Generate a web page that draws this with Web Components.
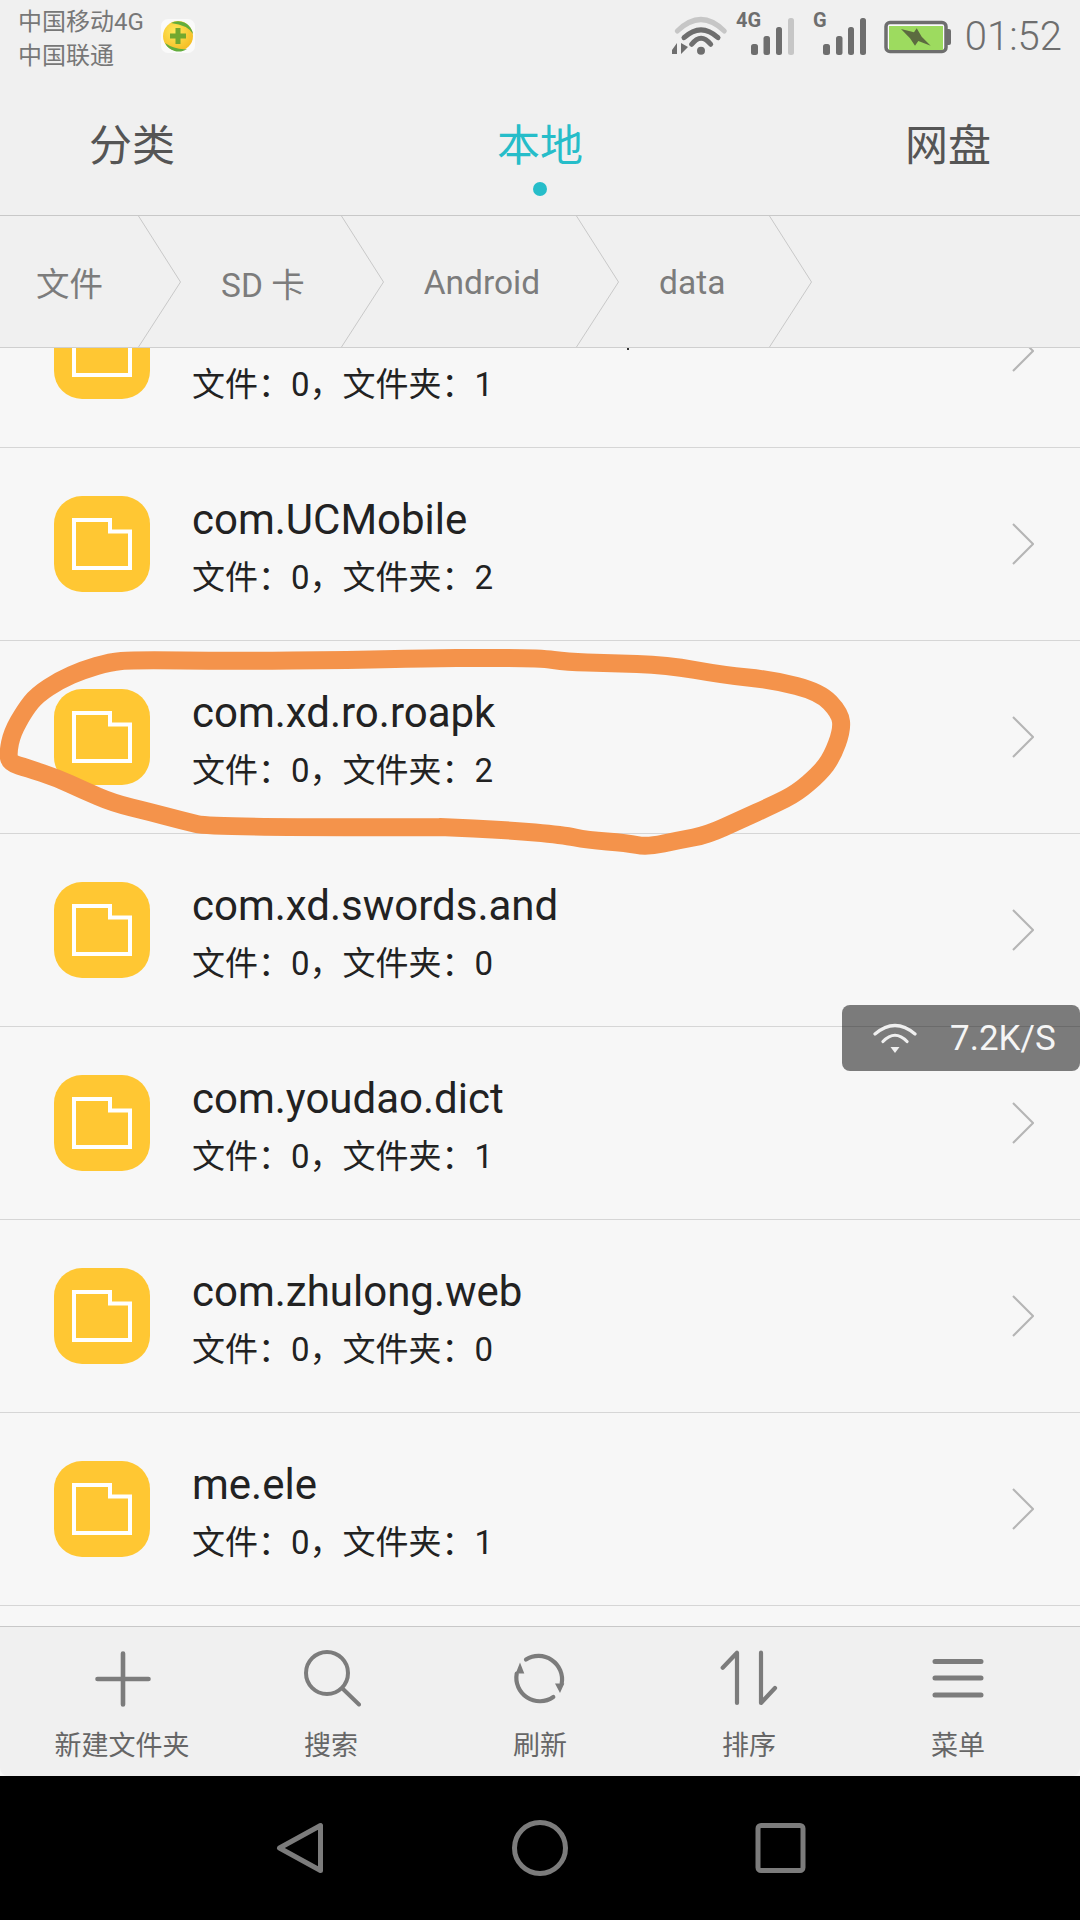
<!DOCTYPE html>
<html lang="zh">
<head>
<meta charset="utf-8">
<title>文件</title>
<style>
  html, body { margin: 0; background: #000; }
  body { font-family: Roboto, "Noto Sans CJK SC", sans-serif; }
</style>
</head>
<body>
<file-app>
  <status-bar slot="status"></status-bar>
  <tab-bar slot="tabs">
    <tab-item>分类</tab-item>
    <tab-item active>本地</tab-item>
    <tab-item>网盘</tab-item>
  </tab-bar>
  <bread-crumbs slot="crumbs">
    <crumb-item first>文件</crumb-item>
    <crumb-item>SD 卡</crumb-item>
    <crumb-item>Android</crumb-item>
    <crumb-item>data</crumb-item>
  </bread-crumbs>
  <file-list slot="list">
    <file-row sub="文件：0，文件夹：1"></file-row>
    <file-row sub="文件：0，文件夹：2">com.UCMobile</file-row>
    <file-row sub="文件：0，文件夹：2">com.xd.ro.roapk</file-row>
    <file-row sub="文件：0，文件夹：0">com.xd.swords.and</file-row>
    <file-row sub="文件：0，文件夹：1">com.youdao.dict</file-row>
    <file-row sub="文件：0，文件夹：0">com.zhulong.web</file-row>
    <file-row sub="文件：0，文件夹：1">me.ele</file-row>
  </file-list>
  <tool-bar slot="tools">
    <tool-item>
      <svg slot="icon" viewBox="0 0 60 60"><path d="M5.5 31H56.5M31 5.5V56.5" stroke-width="4.6"/></svg>
      新建文件夹
    </tool-item>
    <tool-item>
      <svg slot="icon" viewBox="0 0 60 60"><circle cx="26" cy="25" r="21" stroke-width="4"/><path d="M42 41L58 56.5" stroke-width="4"/></svg>
      搜索
    </tool-item>
    <tool-item>
      <svg slot="icon" viewBox="0 0 60 60">
        <path d="M16 11.6A23.5 23.5 0 0 1 51.7 35.6M43.3 49A23.5 23.5 0 0 1 6.7 25.6" stroke-width="4.2"/>
        <path d="M50 45L45 35.6H54.3ZM10 14.6L5.7 25.6H14.3Z" fill="#7c7c7c" stroke="none"/>
      </svg>
      刷新
    </tool-item>
    <tool-item>
      <svg slot="icon" viewBox="0 0 60 60"><path d="M3.7 19.7L18 4.7V55M42 4.7V55L56 40" stroke-width="4.2"/></svg>
      排序
    </tool-item>
    <tool-item>
      <svg slot="icon" viewBox="0 0 60 60"><path d="M7 13.6H53M7 30H53M7 47H53"/></svg>
      菜单
    </tool-item>
  </tool-bar>
  <nav-bar slot="nav"></nav-bar>
  <speed-badge slot="overlay">7.2K/S</speed-badge>
  <ink-ring slot="overlay"></ink-ring>
</file-app>

<script>
class FileApp extends HTMLElement {
  constructor() {
    super();
    this.attachShadow({mode: 'open'}).innerHTML = `
    <style>
    :host {
      display: flex;
      flex-direction: column;
      position: relative;
      width: 1080px;
      height: 1920px;
      overflow: hidden;
      background: #f7f7f7;
    }
    </style>
    <slot name="status"></slot>
    <slot name="tabs"></slot>
    <slot name="crumbs"></slot>
    <slot name="list"></slot>
    <slot name="tools"></slot>
    <slot name="nav"></slot>
    <slot name="overlay"></slot>
    `;
  }
}

class StatusBar extends HTMLElement {
  constructor() {
    super();
    this.attachShadow({mode: 'open'}).innerHTML = `
    <style>
    :host {
      display: flex;
      align-items: flex-start;
      height: 70px;
      background: #f0f0f0;
      color: #777;
      box-sizing: border-box;
      padding-left: 18px;
    }
    .carriers { font-size: 24px; line-height: 34px; padding-top: 5px; width: 143px; }
    .shield { width: 34px; height: 34px; margin-top: 19px; }
    .icons { width: 300px; height: 70px; margin-left: auto; flex: none; }
    .time {
      font-size: 40px;
      line-height: 70px;
      color: #6e6e6e;
      margin: 0 18px 0 5px;
      padding-top: 2px;
      height: 68px;
      font-weight: 300;
    }
    text { font: bold 20px Roboto, sans-serif; fill: #6e6e6e; }
    </style>
    <div class="carriers"><div>中国移动4G</div><div>中国联通</div></div>
    <svg class="shield" viewBox="0 0 34 34">
      <defs>
        <radialGradient id="sun" cx="0.4" cy="0.35" r="0.75">
          <stop offset="0" stop-color="#ffe95c"/>
          <stop offset="1" stop-color="#f4b81e"/>
        </radialGradient>
      </defs>
      <rect width="34" height="34" rx="7" fill="#fafafa"/>
      <circle cx="17" cy="17" r="15" fill="url(#sun)"/>
      <path d="M10 4A15 15 0 0 1 32 15Q27 6 10 4ZM4 24A15 15 0 0 0 26 30Q14 31 4 24Z" fill="#62ad3d"/>
      <path d="M14.5 9H19.5V14.5H25V19.5H19.5V25H14.5V19.5H9V14.5H14.5Z" fill="#73a82f"/>
    </svg>
    <svg class="icons" viewBox="660 0 300 70">
      <g fill="none" stroke="#6e6e6e" stroke-width="5" stroke-linecap="round">
        <path d="M677.3 31Q701 8 724.3 31" stroke="#c6c6c6"/>
        <path d="M684 37.7Q701 22 718 37.7"/>
        <path d="M691.7 44.3Q701 32 710.7 44.3"/>
      </g>
      <circle cx="701" cy="50.7" r="4" fill="#6e6e6e"/>
      <path d="M672 50L677 43V54H672ZM681 43L688 47L681 54Z" fill="#6e6e6e"/>
      <text x="736" y="27">4G</text>
      <text x="813" y="27">G</text>
      <g fill="#6e6e6e">
        <rect x="751" y="44" width="7" height="11" rx="2.5"/>
        <rect x="763.5" y="36" width="6.5" height="19" rx="2.5"/>
        <rect x="776" y="27" width="6" height="28" rx="2.5"/>
        <rect x="788" y="18" width="6" height="37" rx="2.5" fill="#c6c6c6"/>
        <rect x="823" y="44" width="7" height="11" rx="2.5"/>
        <rect x="836" y="36" width="6.5" height="19" rx="2.5"/>
        <rect x="848" y="27" width="6" height="28" rx="2.5"/>
        <rect x="860" y="18" width="6" height="37" rx="2.5"/>
        <rect x="945" y="29" width="6" height="16" rx="2"/>
      </g>
      <rect x="886" y="22.5" width="60" height="29" rx="4" fill="#fbfbfb" stroke="#6e6e6e" stroke-width="3.5"/>
      <rect x="889" y="26" width="54" height="24" fill="#9ddb5f"/>
      <path d="M901 29L914 32.3L916.7 28.3L921.7 36.7L930.7 45.7L918.3 41L915 45.7L910 38.3Z" fill="#5c6b40"/>
    </svg>
    <div class="time">01:52</div>
    `;
  }
}

class TabBar extends HTMLElement {
  constructor() {
    super();
    this.attachShadow({mode: 'open'}).innerHTML = `
    <style>
    :host {
      display: flex;
      justify-content: space-between;
      height: 146px;
      box-sizing: border-box;
      padding: 48px 89px 0;
      background: #f0f0f0;
      border-bottom: 1px solid #c8c8c8;
    }
    </style>
    <slot></slot>
    `;
  }
}

class TabItem extends HTMLElement {
  constructor() {
    super();
    this.attachShadow({mode: 'open'}).innerHTML = `
    <style>
    :host {
      display: flex;
      flex-direction: column;
      align-items: center;
      font-size: 43px;
      line-height: 56px;
      color: #555;
    }
    :host([active]) { color: #26bdc9; }
    .dot { width: 14px; height: 14px; border-radius: 50%; margin-top: 8px; }
    :host([active]) .dot { background: #26bdc9; }
    </style>
    <slot></slot>
    <div class="dot"></div>
    `;
  }
}

class BreadCrumbs extends HTMLElement {
  constructor() {
    super();
    this.attachShadow({mode: 'open'}).innerHTML = `
    <style>
    :host {
      display: flex;
      height: 132px;
      box-sizing: border-box;
      background: #f0f0f0;
      border-bottom: 1px solid #cfcfcf;
      position: relative;
      z-index: 1;
    }
    </style>
    <slot></slot>
    `;
  }
}

class CrumbItem extends HTMLElement {
  constructor() {
    super();
    this.attachShadow({mode: 'open'}).innerHTML = `
    <style>
    :host {
      display: flex;
      align-items: center;
      font-size: 33.5px;
      color: #7c7c7c;
    }
    .label {
      box-sizing: border-box;
      padding: 2px 36px 0 40px;
      white-space: nowrap;
    }
    :host([first]) .label { padding: 0 35px 0 36px; }
    :host(:last-child) .label { min-width: 150px; }
    svg { width: 43px; height: 131px; flex: none; }
    </style>
    <div class="label"><slot></slot></div>
    <svg viewBox="0 0 43 131"><path d="M0.5 0L42.5 66L0.5 131" fill="none" stroke="#c8c8c8" stroke-width="1"/></svg>
    `;
  }
}

class FileList extends HTMLElement {
  constructor() {
    super();
    this.attachShadow({mode: 'open'}).innerHTML = `
    <style>
    :host {
      display: block;
      flex: 1;
      min-height: 0;
      overflow: hidden;
      background: #f7f7f7;
      position: relative;
    }
    .scroll { margin-top: -93px; }
    /* bottom tip of the cut off title of the first row */
    .speck { position: absolute; left: 627px; top: 0; width: 2px; height: 2px; background: #333; }
    </style>
    <div class="scroll"><slot></slot></div>
    <div class="speck"></div>
    `;
  }
}

class FileRow extends HTMLElement {
  constructor() {
    super();
    this.attachShadow({mode: 'open'}).innerHTML = `
    <style>
    :host {
      display: flex;
      align-items: center;
      height: 193px;
      box-sizing: border-box;
      border-bottom: 1px solid #d6d6d6;
      padding: 0 46px 0 54px;
      color: #222;
    }
    .folder { width: 96px; height: 96px; flex: none; margin-right: 42px; }
    .text { flex: 1; min-width: 0; padding-top: 7px; }
    .title { font-size: 42px; line-height: 50px; height: 50px; }
    .sub { font-size: 33px; line-height: 44px; margin-top: 11px; }
    .more { width: 22px; height: 42px; flex: none; }
    </style>
    <svg class="folder" viewBox="0 0 96 96">
      <rect width="96" height="96" rx="28" fill="#ffc733"/>
      <path d="M20 24H56V35.5H76V72H20Z" fill="none" stroke="#fff" stroke-width="4"/>
    </svg>
    <div class="text">
      <div class="title"><slot></slot></div>
      <div class="sub"></div>
    </div>
    <svg class="more" viewBox="0 0 22 42"><path d="M1 1L21 21L1 41" fill="none" stroke="#b5b5b5" stroke-width="2"/></svg>
    `;
    this.shadowRoot.querySelector(".sub").textContent = this.getAttribute("sub");
  }
}

class ToolBar extends HTMLElement {
  constructor() {
    super();
    this.attachShadow({mode: 'open'}).innerHTML = `
    <style>
    :host {
      display: grid;
      grid-template-columns: repeat(5, 209px);
      justify-content: center;
      height: 150px;
      box-sizing: border-box;
      padding-top: 21px;
      background: #f0f0f0;
      border-top: 1px solid #c8c8c8;
      border-radius: 0 0 8px 8px;
    }
    </style>
    <slot></slot>
    `;
  }
}

class ToolItem extends HTMLElement {
  constructor() {
    super();
    this.attachShadow({mode: 'open'}).innerHTML = `
    <style>
    :host {
      display: flex;
      flex-direction: column;
      align-items: center;
      font-size: 27px;
      line-height: 32px;
      color: #666;
    }
    ::slotted(svg) {
      width: 60px;
      height: 60px;
      fill: none;
      stroke: #7c7c7c;
      stroke-width: 5;
      stroke-linecap: round;
      stroke-linejoin: round;
      margin-bottom: 22px;
    }
    </style>
    <slot name="icon"></slot>
    <slot></slot>
    `;
  }
}

class NavBar extends HTMLElement {
  constructor() {
    super();
    this.attachShadow({mode: 'open'}).innerHTML = `
    <style>
    :host {
      display: flex;
      justify-content: center;
      align-items: center;
      height: 144px;
      background: #000;
    }
    svg {
      width: 240px;
      height: 60px;
      fill: none;
      stroke: #7c7c7c;
      stroke-width: 5;
      stroke-linejoin: round;
    }
    </style>
    <svg viewBox="0 0 240 60"><path d="M140.5 7.5V52.5L99.5 30Z"/></svg>
    <svg viewBox="0 0 240 60"><circle cx="120" cy="30" r="25.5"/></svg>
    <svg viewBox="0 0 240 60"><rect x="98" y="7.5" width="45" height="45" rx="3"/></svg>
    `;
  }
}

class SpeedBadge extends HTMLElement {
  constructor() {
    super();
    this.attachShadow({mode: 'open'}).innerHTML = `
    <style>
    :host {
      position: absolute;
      left: 842px;
      top: 1005px;
      width: 238px;
      height: 66px;
      display: flex;
      align-items: center;
      box-sizing: border-box;
      padding-left: 31px;
      border-radius: 8px;
      background: rgba(0, 0, 0, 0.5);
      color: #f5f5f5;
      font-size: 35px;
    }
    svg { width: 44px; height: 30px; margin-right: 33px; flex: none; }
    </style>
    <svg viewBox="0 0 44 30">
      <path d="M2 11Q22 -6 42 11M10 18.5Q22 6 34 18.5" fill="none" stroke="#f0f0f0" stroke-width="3.2" stroke-linecap="round"/>
      <path d="M17.5 24H26.5L22 30Z" fill="#f0f0f0"/>
    </svg>
    <slot></slot>
    `;
  }
}

class InkRing extends HTMLElement {
  static POINTS = [
    [440,827],[213,828],[180,820],[150,812],[113,803],[83,790],[57,778],[27,768],[10,763],[8,753],
    [12,733],[25,710],[37,695],[60,680],[83,670],[110,662],[133,660],[233,661],[350,660],[440,658],
    [473,658],[540,658],[567,662],[607,663],[667,665],[723,675],[773,680],[820,692],[840,713],[842,730],
    [832,757],[820,773],[797,793],[773,805],[740,820],[707,835],[680,840],[647,847],[627,843],[587,840],
    [563,835],[507,830],[440,827]
  ];

  constructor() {
    super();
    this.attachShadow({mode: 'open'}).innerHTML = `
    <style>
    :host { position: absolute; left: 0; top: 0; width: 1080px; height: 1920px; pointer-events: none; }
    svg { display: block; }
    </style>
    <svg width="1080" height="1920" viewBox="0 0 1080 1920">
      <path fill="none" stroke="#f4934b" stroke-width="18" stroke-linecap="round" stroke-linejoin="round"/>
    </svg>
    `;
    this.shadowRoot.querySelector("path").setAttribute("d", this.smooth(InkRing.POINTS));
  }

  // quadratic curves through the midpoints, the stroke was drawn by hand
  smooth(points) {
    let d = `M${points[0][0]} ${points[0][1]}`;
    for (let i = 1; i < points.length - 1; i++) {
      const mx = (points[i][0] + points[i + 1][0]) / 2;
      const my = (points[i][1] + points[i + 1][1]) / 2;
      d += `Q${points[i][0]} ${points[i][1]} ${mx} ${my}`;
    }
    return d + `L${points[points.length - 1][0]} ${points[points.length - 1][1]}`;
  }
}

customElements.define("status-bar", StatusBar);
customElements.define("tab-bar", TabBar);
customElements.define("tab-item", TabItem);
customElements.define("bread-crumbs", BreadCrumbs);
customElements.define("crumb-item", CrumbItem);
customElements.define("file-list", FileList);
customElements.define("file-row", FileRow);
customElements.define("tool-bar", ToolBar);
customElements.define("tool-item", ToolItem);
customElements.define("nav-bar", NavBar);
customElements.define("speed-badge", SpeedBadge);
customElements.define("ink-ring", InkRing);
customElements.define("file-app", FileApp);
</script>
</body>
</html>
